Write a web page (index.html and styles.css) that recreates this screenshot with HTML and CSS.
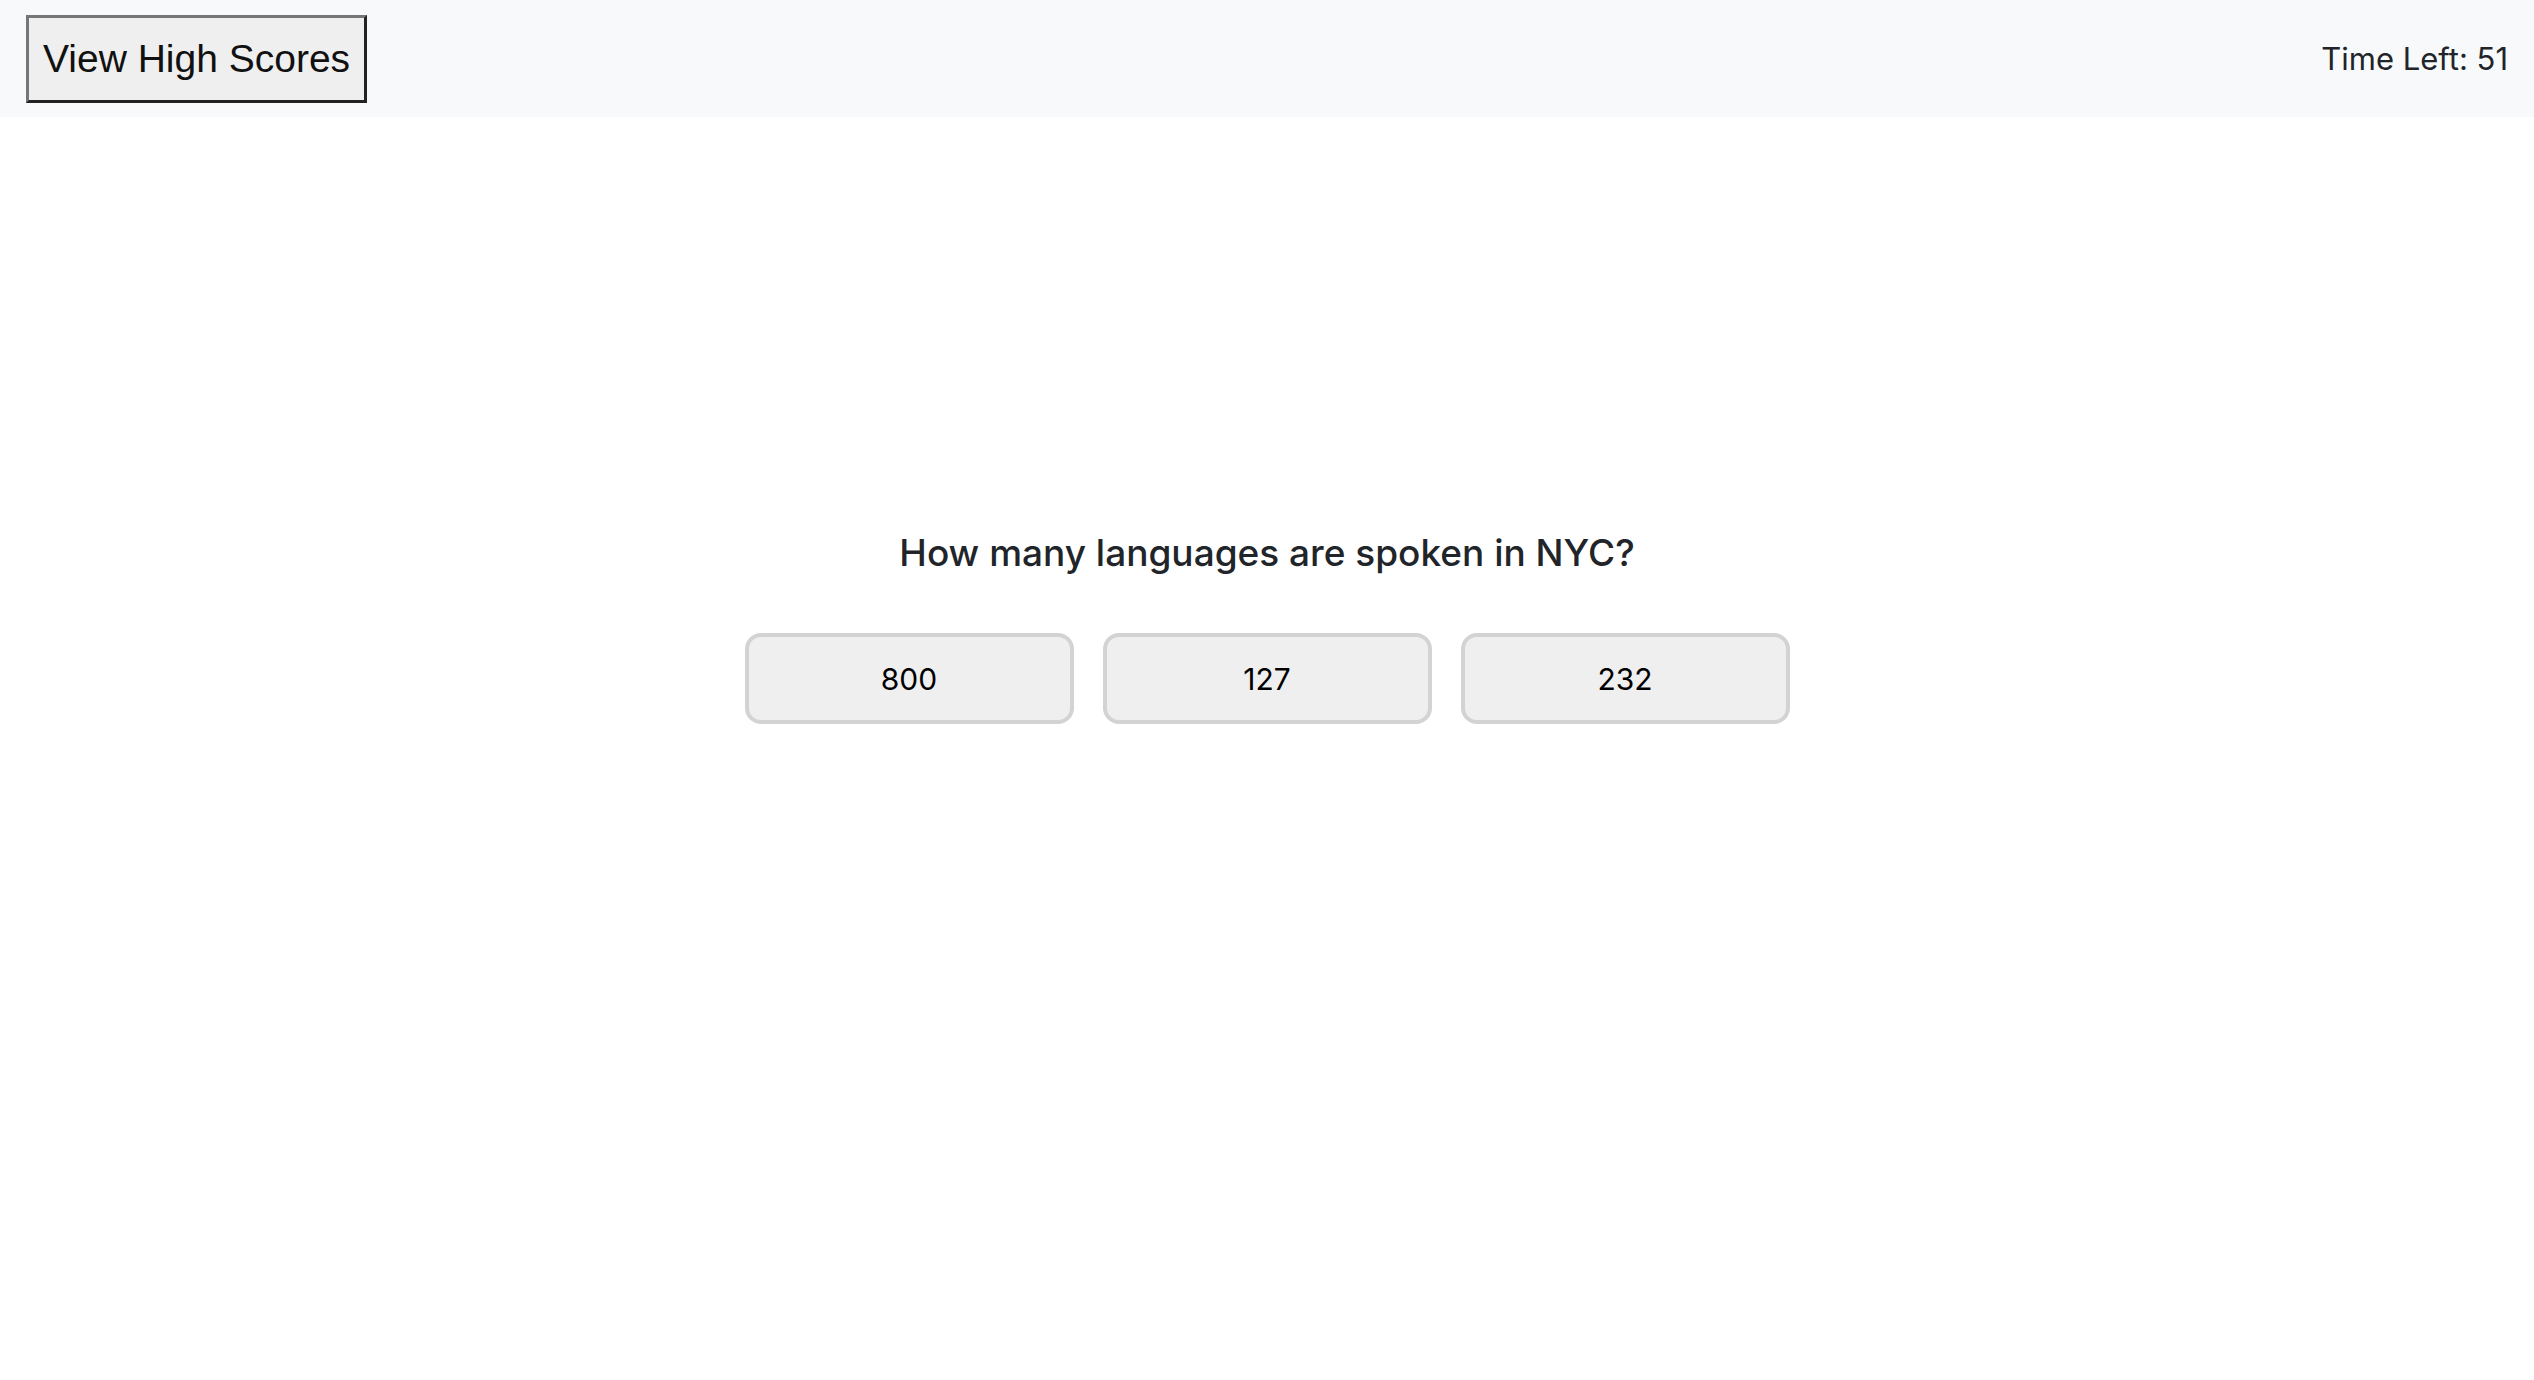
FILE: index.html
```html
<!DOCTYPE html>
<html lang="en">
<head>
<meta charset="utf-8">
<title>Quiz</title>
<link rel="stylesheet" href="styles.css">
</head>
<body>
<header class="topbar">
  <button class="scores-btn" type="button">View High Scores</button>
  <div class="timer">Time Left: 51</div>
</header>
<main class="quiz">
  <h2 class="question">How many languages are spoken in NYC?</h2>
  <div class="answers">
    <button class="answer" type="button">800</button>
    <button class="answer" type="button">127</button>
    <button class="answer" type="button">232</button>
  </div>
</main>
</body>
</html>
```
FILE: styles.css
```css
* { box-sizing: border-box; }
html, body {
  margin: 0;
  padding: 0;
  background: #ffffff;
  font-family: Inter, "Liberation Sans", sans-serif;
  color: #212529;
}
.topbar {
  display: flex;
  align-items: center;
  justify-content: space-between;
  height: 117px;
  padding: 0 26px;
  background: #f8f9fa;
}
.scores-btn {
  height: 88px;
  padding: 0 14px;
  margin: 0;
  font-family: "Liberation Sans", Arial, sans-serif;
  font-size: 39px;
  color: #111;
  background: #efefef;
  border-width: 3px;
  border-style: solid;
  border-color: #767676 #222 #222 #767676;
  border-radius: 0;
}
.timer {
  font-size: 31px;
  color: #212529;
}
.quiz {
  display: flex;
  flex-direction: column;
  align-items: center;
  padding-top: 413px;
}
.question {
  margin: 0 0 57px;
  font-size: 37px;
  line-height: 46px;
  font-weight: 500;
  color: #212529;
}
.answers {
  display: flex;
  gap: 29px;
}
.answer {
  width: 329px;
  height: 91px;
  margin: 0;
  padding: 0;
  font-family: Inter, "Liberation Sans", sans-serif;
  font-size: 30px;
  color: #000;
  background: #efefef;
  border: 4px solid #d3d3d3;
  border-radius: 16px;
}
```
